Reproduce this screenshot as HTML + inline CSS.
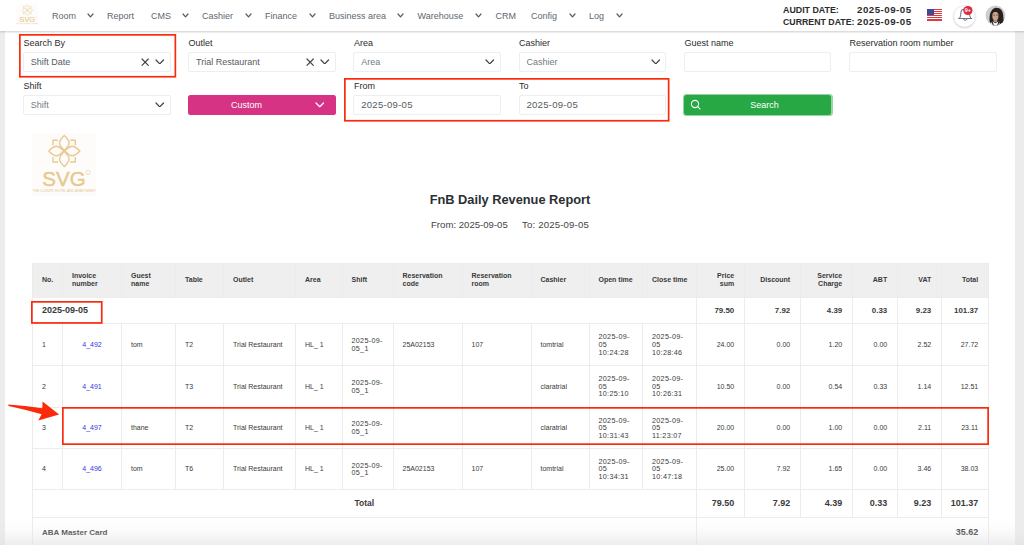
<!DOCTYPE html>
<html><head><meta charset="utf-8">
<style>
*{box-sizing:border-box;margin:0;padding:0}
html,body{width:1024px;height:545px;overflow:hidden;background:#fff;font-family:"Liberation Sans",sans-serif;color:#212529}
.abs{position:absolute}
#lstrip{left:0;top:31px;width:5px;height:515px;background:#ececec}
#rstrip{left:1015px;top:31px;width:9px;height:515px;background:#ececec}
#nav{left:0;top:0;width:1024px;height:31px;background:#fff;box-shadow:0 1px 2px rgba(0,0,0,.2);z-index:5}
.ni{position:absolute;top:10.6px;font-size:9px;color:#60676f;line-height:11px;white-space:nowrap}
.lbl{position:absolute;font-size:9px;color:#2b2b2b;line-height:10px;white-space:nowrap}
.inp{position:absolute;height:19.5px;width:147.7px;border:1px solid #eceef0;border-radius:2px;background:#fff}
.inp span{position:absolute;left:6.8px;top:4px;font-size:9px;color:#666d74;line-height:10px;white-space:nowrap}
.hd{position:absolute;font-weight:bold;color:#2b2b2b;line-height:12px;white-space:nowrap}
table{position:absolute;left:32px;top:262.5px;border-collapse:collapse;table-layout:fixed;width:955.5px}
td,th{border:1px solid #ececec;font-size:7px;line-height:7.6px;padding:0 9px;color:#3a3a3a;vertical-align:middle;text-align:left}
th{background:#efefef;font-weight:bold;color:#3a3a3a;height:34px;white-space:nowrap}
.b{font-weight:bold}
.dtm{letter-spacing:0.3px;font-size:7.2px}
.dr{height:26.7px}
.dr td{font-size:7.9px}
.tr{height:28.1px}
.tr td{font-size:9px}
.dt{font-size:9px!important;font-weight:bold}
.r{text-align:right;padding-right:9.3px}
a{color:#3a35e0;text-decoration:none}
</style></head><body>
<div id="lstrip" class="abs"></div><div id="rstrip" class="abs"></div>
<div id="nav" class="abs">
<div class="abs" style="left:15.5px;top:3.5px;width:22.5px;height:21.5px;background:#fdfcfa"></div><svg class="abs" style="left:15.5px;top:3.5px" width="22.5" height="21.5" viewBox="0 0 64 62.5" preserveAspectRatio="none"><g fill="none" stroke="#e8c98f" stroke-width="1.4" stroke-linejoin="round"><path transform="rotate(0 32.3 18)" d="M32.3 2.5 C34.6 4.6 37.1 7.2 37.1 10.2 C37.1 13.6 33.6 15.4 32.3 18 C31 15.4 27.5 13.6 27.5 10.2 C27.5 7.2 30 4.6 32.3 2.5Z"/><path transform="rotate(90 32.3 18)" d="M32.3 2.5 C34.6 4.6 37.1 7.2 37.1 10.2 C37.1 13.6 33.6 15.4 32.3 18 C31 15.4 27.5 13.6 27.5 10.2 C27.5 7.2 30 4.6 32.3 2.5Z"/><path transform="rotate(180 32.3 18)" d="M32.3 2.5 C34.6 4.6 37.1 7.2 37.1 10.2 C37.1 13.6 33.6 15.4 32.3 18 C31 15.4 27.5 13.6 27.5 10.2 C27.5 7.2 30 4.6 32.3 2.5Z"/><path transform="rotate(270 32.3 18)" d="M32.3 2.5 C34.6 4.6 37.1 7.2 37.1 10.2 C37.1 13.6 33.6 15.4 32.3 18 C31 15.4 27.5 13.6 27.5 10.2 C27.5 7.2 30 4.6 32.3 2.5Z"/>
    <path d="M21 12.3 V7.3 H26 M43.3 12.3 V7.3 H38.3 M21 24 V29 H26 M43.3 24 V29 H38.3"/>
  </g>
  <text x="10.3" y="52.7" font-family="Liberation Sans" font-size="20.5" fill="#e8c98f" stroke="#e8c98f" stroke-width="0.45" textLength="43.4" lengthAdjust="spacingAndGlyphs">SVG</text>
  <circle cx="56" cy="39.4" r="2.1" fill="none" stroke="#e8c98f" stroke-width="0.6"/>
  <text x="0.5" y="59" font-family="Liberation Sans" font-size="3.6" fill="#e6c68c" textLength="63.3" lengthAdjust="spacingAndGlyphs">THE LUXURY HOTEL AND APARTMENT</text></svg>
<div class="ni" style="left:52px">Room</div>
<div class="ni" style="left:107px">Report</div>
<div class="ni" style="left:151px">CMS</div>
<div class="ni" style="left:202px">Cashier</div>
<div class="ni" style="left:265px">Finance</div>
<div class="ni" style="left:329px">Business area</div>
<div class="ni" style="left:417.5px">Warehouse</div>
<div class="ni" style="left:495.5px">CRM</div>
<div class="ni" style="left:531px">Config</div>
<div class="ni" style="left:589px">Log</div>
<svg class="abs" style="left:86.6px;top:12.9px" width="7" height="4.8" viewBox="-1 -1 7 4.8"><path d="M0 0 L2.5 2.8 L5 0" fill="none" stroke="#535a62" stroke-width="1.2" stroke-linecap="round" stroke-linejoin="round"/></svg>
<svg class="abs" style="left:181.6px;top:12.9px" width="7" height="4.8" viewBox="-1 -1 7 4.8"><path d="M0 0 L2.5 2.8 L5 0" fill="none" stroke="#535a62" stroke-width="1.2" stroke-linecap="round" stroke-linejoin="round"/></svg>
<svg class="abs" style="left:244.6px;top:12.9px" width="7" height="4.8" viewBox="-1 -1 7 4.8"><path d="M0 0 L2.5 2.8 L5 0" fill="none" stroke="#535a62" stroke-width="1.2" stroke-linecap="round" stroke-linejoin="round"/></svg>
<svg class="abs" style="left:308.6px;top:12.9px" width="7" height="4.8" viewBox="-1 -1 7 4.8"><path d="M0 0 L2.5 2.8 L5 0" fill="none" stroke="#535a62" stroke-width="1.2" stroke-linecap="round" stroke-linejoin="round"/></svg>
<svg class="abs" style="left:397.1px;top:12.9px" width="7" height="4.8" viewBox="-1 -1 7 4.8"><path d="M0 0 L2.5 2.8 L5 0" fill="none" stroke="#535a62" stroke-width="1.2" stroke-linecap="round" stroke-linejoin="round"/></svg>
<svg class="abs" style="left:474.6px;top:12.9px" width="7" height="4.8" viewBox="-1 -1 7 4.8"><path d="M0 0 L2.5 2.8 L5 0" fill="none" stroke="#535a62" stroke-width="1.2" stroke-linecap="round" stroke-linejoin="round"/></svg>
<svg class="abs" style="left:569.1px;top:12.9px" width="7" height="4.8" viewBox="-1 -1 7 4.8"><path d="M0 0 L2.5 2.8 L5 0" fill="none" stroke="#535a62" stroke-width="1.2" stroke-linecap="round" stroke-linejoin="round"/></svg>
<svg class="abs" style="left:615.6px;top:12.9px" width="7" height="4.8" viewBox="-1 -1 7 4.8"><path d="M0 0 L2.5 2.8 L5 0" fill="none" stroke="#535a62" stroke-width="1.2" stroke-linecap="round" stroke-linejoin="round"/></svg>
<div class="hd" style="left:783px;top:3.7px;font-size:9.7px;transform:scaleX(0.912);transform-origin:0 0">AUDIT DATE:</div>
<div class="hd" style="left:857px;top:3.7px;font-size:9.7px;letter-spacing:0.5px">2025-09-05</div>
<div class="hd" style="left:783px;top:15.8px;font-size:9.7px;transform:scaleX(0.905);transform-origin:0 0">CURRENT DATE:</div>
<div class="hd" style="left:857px;top:15.8px;font-size:9.7px;letter-spacing:0.5px">2025-09-05</div>
<svg class="abs" style="left:927px;top:9px" width="15" height="12" viewBox="0 0 15 12">
    <rect width="15" height="12" fill="#fff"/>
    <g fill="#e0383e"><rect y="0" width="15" height="1"/><rect y="2" width="15" height="1"/><rect y="4" width="15" height="1"/><rect y="6" width="15" height="1"/><rect y="8" width="15" height="1"/><rect y="10" width="15" height="1"/><rect y="11" width="15" height="1"/></g>
    <rect width="7" height="6" fill="#3c4a9a"/>
  </svg>
<div class="abs" style="left:954.4px;top:5.5px;width:21px;height:21px;border-radius:50%;background:#fff;box-shadow:0 0.5px 2.5px rgba(0,0,0,.28)"></div>
<svg class="abs" style="left:954px;top:5px" width="22" height="22" viewBox="954 5 22 22">
    <path d="M959.6 18.3 C960.6 16.8 960.9 14.8 960.9 12.8 C960.9 10.4 962.7 8.9 965.2 8.9 C967.7 8.9 969.5 10.4 969.5 12.8 C969.5 14.8 969.8 16.8 970.8 18.3 M958.6 18.4 H971.8" fill="none" stroke="#6b7580" stroke-width="1.05" stroke-linecap="round"/>
    <path d="M963.6 18.6 A1.7 1.7 0 0 0 967 18.6" fill="none" stroke="#6b7580" stroke-width="1"/>
    <circle cx="967.9" cy="10.5" r="4.6" fill="#df2a40"/>
    <text x="967.9" y="12.4" font-family="Liberation Sans" font-size="5.4" font-weight="bold" fill="#fff" text-anchor="middle">9+</text>
  </svg>
<svg class="abs" style="left:984.5px;top:5.3px" width="21" height="21" viewBox="0 0 21 21">
    <defs><clipPath id="av"><circle cx="10.5" cy="10.5" r="9.9"/></clipPath></defs>
    <g clip-path="url(#av)">
      <rect width="21" height="21" fill="#cdced2"/>
      <path d="M4.8 17 C4 11 5 4.5 10.5 2.8 C15.5 2.5 18.2 6 18.3 11 C18.4 15 19.5 19 18 21 L14 21 L13.5 14 L7.5 14 L6.5 19 Z" fill="#2a201c"/>
      <path d="M8.3 13 H12.5 V18 H8.3 Z" fill="#b58d7b"/><path d="M6.5 14 L14.5 14 L14 21 L7 21 Z" fill="#2a201c"/><rect x="8.6" y="13" width="3.6" height="4" fill="#b89080"/><ellipse cx="10.4" cy="10.9" rx="3.1" ry="4.2" fill="#c9a391"/>
      <path d="M7 8.2 C8.5 6.3 12 6 14 8.3 L14.3 5.8 C12.5 4.3 8.5 4.5 7.2 6.5 Z" fill="#2a201c"/>
      <rect x="8.4" y="9.8" width="1.6" height="0.6" fill="#3a2a25"/><rect x="11.2" y="9.8" width="1.6" height="0.6" fill="#3a2a25"/>
      <path d="M5 21 L7 16.5 L10.3 18 L13.8 16.5 L15.5 21 Z" fill="#f0f0f0"/>
      <path d="M7 16.5 L8.6 21 M13.8 16.5 L12.6 21" stroke="#151515" stroke-width="1"/>
    </g>
  </svg>
</div>
<div class="lbl" style="left:23.5px;top:38px">Search By</div>
<div class="lbl" style="left:188.5px;top:38px">Outlet</div>
<div class="lbl" style="left:354px;top:38px">Area</div>
<div class="lbl" style="left:519px;top:38px">Cashier</div>
<div class="lbl" style="left:684.5px;top:38px">Guest name</div>
<div class="lbl" style="left:849.5px;top:38px">Reservation room number</div>
<div class="inp" style="left:23px;top:52.3px"><span style="color:#555b61">Shift Date</span></div>
<div class="inp" style="left:188.2px;top:52.3px"><span style="color:#555b61">Trial Restaurant</span></div>
<div class="inp" style="left:353.4px;top:52.3px"><span style="color:#737a80">Area</span></div>
<div class="inp" style="left:518.6px;top:52.3px"><span style="color:#737a80">Cashier</span></div>
<div class="inp" style="left:683.8px;top:52.3px"></div>
<div class="inp" style="left:849px;top:52.3px"></div>
<div class="lbl" style="left:23.5px;top:80.6px">Shift</div>
<div class="lbl" style="left:354px;top:80.6px">From</div>
<div class="lbl" style="left:519px;top:80.6px">To</div>
<div class="inp" style="left:23px;top:95.4px"><span style="color:#737a80">Shift</span></div>
<div class="abs" style="left:188px;top:95.3px;width:147.8px;height:19.6px;background:#d63384;border-radius:2.5px"></div>
<div class="abs" style="left:188px;top:100px;width:117px;text-align:center;font-size:9px;line-height:11px;color:#fff">Custom</div>
<div class="inp" style="left:353.4px;top:95.4px"><span style="color:#555b61;font-size:9.6px;letter-spacing:0.25px">2025-09-05</span></div>
<div class="inp" style="left:518.6px;top:95.4px"><span style="color:#555b61;font-size:9.6px;letter-spacing:0.25px">2025-09-05</span></div>
<div class="abs" style="left:683px;top:94.1px;width:149.5px;height:22.1px;background:#98d5a5;border-radius:3.5px"></div>
<div class="abs" style="left:684.1px;top:95.2px;width:147.3px;height:20px;background:#28a745;border-radius:2.5px"></div>
<div class="abs" style="left:684px;top:100px;width:161px;text-align:center;font-size:9px;line-height:11px;color:#fff">Search</div>
<svg class="abs" style="left:690px;top:98.5px" width="12" height="12" viewBox="0 0 12 12"><circle cx="5" cy="5" r="3.6" fill="none" stroke="#fff" stroke-width="1.1"/><path d="M7.7 7.7 L10 10" stroke="#fff" stroke-width="1.1" stroke-linecap="round"/></svg>
<svg class="abs" style="left:140.6px;top:57.6px" width="8.3" height="8.3" viewBox="-1 -1 8.3 8.3"><line x1="0" y1="0" x2="6.3" y2="6.3" stroke="#3d4249" stroke-width="1.15" stroke-linecap="round"/><line x1="6.3" y1="0" x2="0" y2="6.3" stroke="#3d4249" stroke-width="1.15" stroke-linecap="round"/></svg><svg class="abs" style="left:155.2px;top:58.5px" width="9.5" height="5.9" viewBox="-1 -1 9.5 5.9"><path d="M0 0 L3.75 3.9 L7.5 0" fill="none" stroke="#3d4249" stroke-width="1.2" stroke-linecap="round" stroke-linejoin="round"/></svg>
<svg class="abs" style="left:305.8px;top:57.6px" width="8.3" height="8.3" viewBox="-1 -1 8.3 8.3"><line x1="0" y1="0" x2="6.3" y2="6.3" stroke="#3d4249" stroke-width="1.15" stroke-linecap="round"/><line x1="6.3" y1="0" x2="0" y2="6.3" stroke="#3d4249" stroke-width="1.15" stroke-linecap="round"/></svg><svg class="abs" style="left:320.4px;top:58.5px" width="9.5" height="5.9" viewBox="-1 -1 9.5 5.9"><path d="M0 0 L3.75 3.9 L7.5 0" fill="none" stroke="#3d4249" stroke-width="1.2" stroke-linecap="round" stroke-linejoin="round"/></svg>
<svg class="abs" style="left:485.3px;top:58.5px" width="9.5" height="5.9" viewBox="-1 -1 9.5 5.9"><path d="M0 0 L3.75 3.9 L7.5 0" fill="none" stroke="#3d4249" stroke-width="1.2" stroke-linecap="round" stroke-linejoin="round"/></svg><svg class="abs" style="left:650.5px;top:58.5px" width="9.5" height="5.9" viewBox="-1 -1 9.5 5.9"><path d="M0 0 L3.75 3.9 L7.5 0" fill="none" stroke="#3d4249" stroke-width="1.2" stroke-linecap="round" stroke-linejoin="round"/></svg>
<svg class="abs" style="left:155px;top:101.6px" width="9.5" height="5.9" viewBox="-1 -1 9.5 5.9"><path d="M0 0 L3.75 3.9 L7.5 0" fill="none" stroke="#3d4249" stroke-width="1.2" stroke-linecap="round" stroke-linejoin="round"/></svg><svg class="abs" style="left:315.2px;top:102.2px" width="9.5" height="5.7" viewBox="-1 -1 9.5 5.7"><path d="M0 0 L3.75 3.7 L7.5 0" fill="none" stroke="#fff" stroke-width="1.25" stroke-linecap="round" stroke-linejoin="round"/></svg>
<svg class="abs" style="left:17px;top:32.3px;overflow:visible;z-index:3" width="161.2" height="47.6"><rect x="2.85" y="2.85" width="155.5" height="41.9" fill="none" stroke="#fa2a0a" stroke-width="1.7"/></svg>
<svg class="abs" style="left:342.3px;top:76.3px;overflow:visible;z-index:3" width="329.5" height="47.6"><rect x="2.85" y="2.85" width="323.8" height="41.9" fill="none" stroke="#fa2a0a" stroke-width="1.7"/></svg>
<div class="abs" style="left:31.5px;top:133px;width:64px;height:62.5px;background:#fdfcfa"></div><svg class="abs" style="left:31.5px;top:133px" width="64" height="62.5" viewBox="0 0 64 62.5" preserveAspectRatio="none"><g fill="none" stroke="#e8c98f" stroke-width="1.4" stroke-linejoin="round"><path transform="rotate(0 32.3 18)" d="M32.3 2.5 C34.6 4.6 37.1 7.2 37.1 10.2 C37.1 13.6 33.6 15.4 32.3 18 C31 15.4 27.5 13.6 27.5 10.2 C27.5 7.2 30 4.6 32.3 2.5Z"/><path transform="rotate(90 32.3 18)" d="M32.3 2.5 C34.6 4.6 37.1 7.2 37.1 10.2 C37.1 13.6 33.6 15.4 32.3 18 C31 15.4 27.5 13.6 27.5 10.2 C27.5 7.2 30 4.6 32.3 2.5Z"/><path transform="rotate(180 32.3 18)" d="M32.3 2.5 C34.6 4.6 37.1 7.2 37.1 10.2 C37.1 13.6 33.6 15.4 32.3 18 C31 15.4 27.5 13.6 27.5 10.2 C27.5 7.2 30 4.6 32.3 2.5Z"/><path transform="rotate(270 32.3 18)" d="M32.3 2.5 C34.6 4.6 37.1 7.2 37.1 10.2 C37.1 13.6 33.6 15.4 32.3 18 C31 15.4 27.5 13.6 27.5 10.2 C27.5 7.2 30 4.6 32.3 2.5Z"/>
    <path d="M21 12.3 V7.3 H26 M43.3 12.3 V7.3 H38.3 M21 24 V29 H26 M43.3 24 V29 H38.3"/>
  </g>
  <text x="10.3" y="52.7" font-family="Liberation Sans" font-size="20.5" fill="#e8c98f" stroke="#e8c98f" stroke-width="0.45" textLength="43.4" lengthAdjust="spacingAndGlyphs">SVG</text>
  <circle cx="56" cy="39.4" r="2.1" fill="none" stroke="#e8c98f" stroke-width="0.6"/>
  <text x="0.5" y="59" font-family="Liberation Sans" font-size="3.6" fill="#e6c68c" textLength="63.3" lengthAdjust="spacingAndGlyphs">THE LUXURY HOTEL AND APARTMENT</text></svg>
<div class="abs" style="left:-2px;top:191.8px;width:1024px;text-align:center;font-size:12.8px;font-weight:bold;color:#2b2f33;line-height:16px">FnB Daily Revenue Report</div>
<div class="abs" style="left:431px;top:219px;font-size:9.6px;color:#444;line-height:12px;white-space:nowrap">From: 2025-09-05</div>
<div class="abs" style="left:522px;top:219px;font-size:9.6px;letter-spacing:0.17px;color:#444;line-height:12px;white-space:nowrap">To: 2025-09-05</div>
<table><colgroup><col style="width:30px"><col style="width:59px"><col style="width:54px"><col style="width:48px"><col style="width:72px"><col style="width:46.5px"><col style="width:51px"><col style="width:69px"><col style="width:69px"><col style="width:58px"><col style="width:53.5px"><col style="width:53.5px"><col style="width:48px"><col style="width:56px"><col style="width:52px"><col style="width:45px"><col style="width:44px"><col style="width:47px"></colgroup><tr><th>No.</th><th>Invoice<br>number</th><th>Guest<br>name</th><th>Table</th><th>Outlet</th><th>Area</th><th>Shift</th><th>Reservation<br>code</th><th>Reservation<br>room</th><th>Cashier</th><th>Open time</th><th>Close time</th><th class="r">Price<br>sum</th><th class="r">Discount</th><th class="r">Service<br>Charge</th><th class="r">ABT</th><th class="r">VAT</th><th class="r">Total</th></tr><tr class="dr"><td colspan="12" class="dt">2025-09-05</td><td class="r b">79.50</td><td class="r b">7.92</td><td class="r b">4.39</td><td class="r b">0.33</td><td class="r b">9.23</td><td class="r b">101.37</td></tr><tr style="height:42.2px"><td>1</td><td style="text-align:center;padding:0"><a>4_492</a></td><td>tom</td><td>T2</td><td>Trial Restaurant</td><td>HL_ 1</td><td class="dtm">2025-09-<br>05_1</td><td>25A02153</td><td>107</td><td>tomtrial</td><td class="dtm">2025-09-<br>05<br>10:24:28</td><td class="dtm">2025-09-<br>05<br>10:28:46</td><td class="r">24.00</td><td class="r">0.00</td><td class="r">1.20</td><td class="r">0.00</td><td class="r">2.52</td><td class="r">27.72</td></tr><tr style="height:41.5px"><td>2</td><td style="text-align:center;padding:0"><a>4_491</a></td><td></td><td>T3</td><td>Trial Restaurant</td><td>HL_ 1</td><td class="dtm">2025-09-<br>05_1</td><td></td><td></td><td>claratrial</td><td class="dtm">2025-09-<br>05<br>10:25:10</td><td class="dtm">2025-09-<br>05<br>10:26:31</td><td class="r">10.50</td><td class="r">0.00</td><td class="r">0.54</td><td class="r">0.33</td><td class="r">1.14</td><td class="r">12.51</td></tr><tr style="height:41.1px"><td>3</td><td style="text-align:center;padding:0"><a>4_497</a></td><td>thane</td><td>T2</td><td>Trial Restaurant</td><td>HL_ 1</td><td class="dtm">2025-09-<br>05_1</td><td></td><td></td><td>claratrial</td><td class="dtm">2025-09-<br>05<br>10:31:43</td><td class="dtm">2025-09-<br>05<br>11:23:07</td><td class="r">20.00</td><td class="r">0.00</td><td class="r">1.00</td><td class="r">0.00</td><td class="r">2.11</td><td class="r">23.11</td></tr><tr style="height:41.3px"><td>4</td><td style="text-align:center;padding:0"><a>4_496</a></td><td>tom</td><td>T6</td><td>Trial Restaurant</td><td>HL_ 1</td><td class="dtm">2025-09-<br>05_1</td><td>25A02153</td><td>107</td><td>tomtrial</td><td class="dtm">2025-09-<br>05<br>10:34:31</td><td class="dtm">2025-09-<br>05<br>10:47:18</td><td class="r">25.00</td><td class="r">7.92</td><td class="r">1.65</td><td class="r">0.00</td><td class="r">3.46</td><td class="r">38.03</td></tr><tr class="tr"><td colspan="12" class="b" style="text-align:center;font-size:8.5px">Total</td><td class="r b">79.50</td><td class="r b">7.92</td><td class="r b">4.39</td><td class="r b">0.33</td><td class="r b">9.23</td><td class="r b">101.37</td></tr><tr style="height:40px"><td colspan="12" class="b" style="font-size:8px;vertical-align:top;padding-top:10.7px">ABA Master Card</td><td colspan="6" class="r b" style="font-size:9px;vertical-align:top;padding-top:10.7px">35.62</td></tr></table>
<svg class="abs" style="left:29.2px;top:299.1px;overflow:visible;z-index:3" width="75.6" height="26.8"><rect x="2.85" y="2.85" width="69.89999999999999" height="21.1" fill="none" stroke="#fa2a0a" stroke-width="1.7"/></svg>
<svg class="abs" style="left:59.6px;top:405.4px;overflow:visible;z-index:3" width="931" height="42"><rect x="2.85" y="2.85" width="925.3" height="36.3" fill="none" stroke="#fa2a0a" stroke-width="1.7"/></svg>
<svg class="abs" style="left:0;top:395px;z-index:3" width="64" height="30" viewBox="0 395 64 30"><path d="M8.4 404.4 Q8 405.2 8.6 406 Q25 409.5 41.6 414.2 L38.3 420.5 L59.1 414.4 L42.6 401.6 L42.3 408.3 Q25 405.5 8.4 404.4 Z" fill="#fa2a0a"/></svg>
<div class="abs" style="left:0;top:518px;width:1024px;height:27px;z-index:4;background:linear-gradient(to bottom,rgba(230,230,230,0) 0%,rgba(230,230,230,.15) 45%,rgba(225,225,225,.6) 100%)"></div>
</body></html>
